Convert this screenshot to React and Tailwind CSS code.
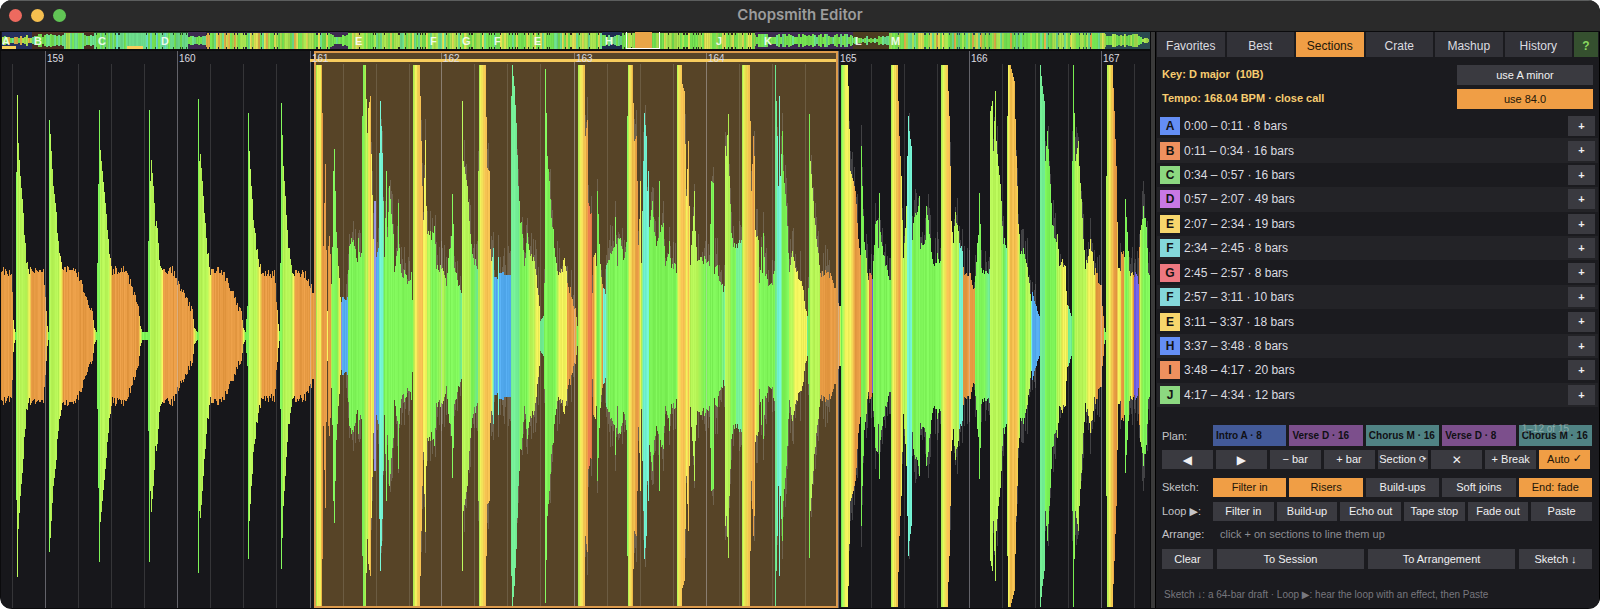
import { useMemo, useState } from 'react';

const PALETTE = {
  G: [126, 244, 88],
  L: [182, 244, 86],
  Y: [240, 240, 90],
  A: [242, 190, 78],
  O: [231, 155, 68],
  R: [230, 122, 72],
  T: [116, 238, 150],
  C: [112, 240, 208],
  B: [85, 172, 240],
  V: [150, 146, 224],
  P: [112, 96, 228],
};

// Envelope of the zoomed waveform: x, amplitude, colour (kept from the previous point if left out)
const ENVELOPE = `
1,70,O 11,69 12,50 13,16,Y 14,7 15,4,G 16,164 17,241,L 18,193 20,160 23,125 26,80 29,71,Y 31,70,O 43,68 45,40 47,10,Y 48,4,G
49,216 50,202,L 53,150 56,125 58,98 61,75,Y 63,70,O 74,70 78,66 82,54 88,38 92,25 94,8,Y 96,4,G
99,226 100,186,L 102,165 105,133 108,100 110,80,Y 112,70,O 123,70 128,64 134,46 138,30 140,10,Y 142,4,G 147,4
148,98 149,226 150,155,L 151,176 153,150 155,117 157,115 159,78 162,70,Y 163,70,O 172,70 180,54 187,40 192,27 194,8,Y 197,4,G
198,237 199,175,L 200,182 202,155 204,125 207,90 210,70,Y 212,70,O 221,70 228,58 235,42 241,25 243,8,Y 245,4,G
247,30 248,223 249,185,L 251,150 253,125 256,93 259,75,Y 262,66,O 274,66 276,40 278,12,Y 279,5,G
280,80 281,233 283,170,L 286,125 288,95 291,75 293,67,Y 295,68,O 305,65 310,57 313,47
314,271,L 316,271 317,271,Y 320,271 321,271,A 322,223,O 323,95 325,172 326,90 327,25,Y 328,95,O 329,105 330,85 331,60,L 332,95,G
333,165 334,187 335,145 336,105 338,75,L 339,60,Y 340,40 341,40,V 342,39,B 347,39 348,70,G 349,95 353,103 357,75 358,100 359,85 361,90
362,220 363,271 365,271,L 367,203 368,228,Y 370,240,A 371,182,Y 373,100 374,135,V 375,135 376,80,B 378,90 379,183,C 380,235 381,210 382,183 383,135,T
384,80,G 386,165 387,105 389,150 391,125 393,110 394,72 397,90 398,133 399,95 400,80 402,60 405,70 407,55 411,65 412,45
413,271,L 415,271,Y 419,271,A 420,240 422,150 423,120,Y 425,196 426,130 427,110,L 429,110 431,100,G 434,112 436,75 443,70,L 446,57,G
449,90 451,100 452,142 453,115 454,75 458,58 461,45,T 462,235,L 463,175 467,150 469,118 471,95,G 473,80 477,75,T 478,165,L
479,271 480,271,Y 485,271,A 487,168 489,165 490,95 491,80,Y 493,93,C 494,60,B 497,60 498,85,C 499,65,B 510,63 511,240,T
512,271 514,250 516,213 518,150 520,120,G 522,110 524,75 527,105 530,85,L 533,80 536,65,Y 539,30 540,15,T 543,20 544,60,G 545,267 547,180
549,155 551,120 553,108 555,85 557,70,L 559,65,Y 562,70 564,85 566,65 567,57,O 572,44 575,28 577,10,G
578,271,L 580,271,Y 584,271,A 585,200 587,216,O 588,133,R 591,125 592,45,O 593,80 595,90,Y 596,75,L 597,145,G 599,100 600,75,L
602,60,O 603,48,C 605,50 606,75,T 608,82,G 614,95 615,123 617,70 618,105 621,98 623,80 626,95
627,220 628,271,L 629,271,Y 632,271,A 634,195 636,200,O 637,155 638,95 640,155,Y 641,78,L 643,175,C 644,223 646,200 647,145 648,165 649,115,G
652,135 656,90 658,100 659,155 660,110 663,118 665,75 669,95 671,75 676,72 677,271,L 678,271,Y 681,271,A 682,252 684,245
686,140,Y 688,195,A 689,130,Y 690,75,L 692,110 694,145 695,110 697,80 704,80,G 709,75 711,155 713,153 714,70 717,75 720,55 724,52,T
725,190,L 726,180 728,222 729,160 731,105,G 735,90 736,92,T 741,100 742,271,L 744,271,Y 749,271,A 750,215 751,145 753,200,O 754,180,A
755,110,Y 758,100,L 759,55,G 761,90 762,70 763,105 765,65 770,53 774,65 775,271,T 776,235 777,200,C 778,150 779,240 780,160 782,205,G
783,165 786,130 788,90 789,70,L 792,85 795,75,Y 800,60 803,50 806,25 807,20,T 808,50,G 809,222 810,175,L 813,135 816,100 819,75
820,68,O 831,66 836,50 839,30 840,30,L 841,271,G 843,271,L 845,271,Y 847,271 848,250 850,165 853,155,A 855,145,O 858,105 860,85
861,190,G 862,150 864,100 866,80,L 868,60,Y 869,65,R 871,70 872,62,P 873,75,G 875,120 877,118 878,95 879,143 880,110 883,85 887,70 890,60
891,271,L 893,271,Y 897,271,A 899,200,O 901,160,Y 903,80,L 906,130 907,180,C 908,220 909,205 911,190 912,105,G 914,125 918,130 919,140
920,95 925,100 926,130 929,110 932,80 936,75 937,90 939,80 940,80 941,271,L 944,271,Y 947,271,A 949,220 950,170 951,120,Y 953,100,L
955,125 958,110 959,95,C 962,90 963,70,O 970,65 974,50 975,65,G 978,110 979,143 980,120 981,75 984,65 988,70,T 989,75
990,225,L 992,235 993,185 995,245 996,195 998,170 1000,152 1003,100,G 1006,95,T 1007,220,L 1008,271,Y 1010,271,A 1014,255 1016,180
1018,120,Y 1020,85,G 1024,90 1026,80,L 1028,65 1030,50 1031,42,C 1032,45,B 1035,35 1037,25 1039,20 1040,271,T 1042,250 1044,235
1045,175,G 1047,205 1049,170 1052,115 1055,100 1057,105,L 1059,72 1062,80,Y 1065,72 1067,35 1068,30,T 1071,20 1072,175,G 1073,271
1075,175,L 1078,195 1079,170 1082,120 1085,75 1088,85,Y 1090,98 1092,85 1094,70 1096,67,O 1101,54 1103,20 1104,8,G 1105,4 1106,160,L
1107,271 1109,271,Y 1112,271,A 1114,225,O 1116,170 1118,70,Y 1120,70 1121,85,O 1123,90 1124,80,L 1125,137,G 1127,110 1129,65,L
1131,70,Y 1133,68,O 1134,65,P 1138,60 1139,90,O 1140,115,L 1143,130,G 1146,115 1148,70 1150,60
`;

// from, to, min height, max height, colours, section tint
const OVERVIEW = [
  [2, 32, 2, 6, 'GGTGLA', '#26305e'],
  [32, 64, 3, 7, 'GTGGT', '#4a2e22'],
  [64, 84, 8, 8, 'TGTLG', '#4a2e22'],
  [84, 94, 3, 6, 'TGG', '#4a2e22'],
  [94, 188, 8, 8, 'TCTGTG', '#24402a'],
  [188, 206, 3, 6, 'GTG', '#3d2b50'],
  [206, 330, 8, 8, 'GLYGTLGA', '#26203a'],
  [330, 348, 3, 7, 'GTG', '#3d2b50'],
  [348, 602, 8, 8, 'GLGYLGTL', '#2a2a20'],
  [602, 622, 3, 6, 'GGT', '#1f2c50'],
  [622, 755, 8, 8, 'GLGLYG', '#2a2a20'],
  [755, 853, 3, 7, 'GTGG', '#3d2b50'],
  [853, 889, 1, 5, 'GTG', '#4c3c20'],
  [889, 1105, 8, 8, 'GLYLGLTGA', '#2a4a50'],
  [1105, 1140, 4, 7, 'GLG', '#2a4a50'],
  [1140, 1149, 1, 4, 'GL', '#2a4a50'],
];

const OVERVIEW_MARKS = [
  ['A', 2], ['B', 34], ['C', 98], ['D', 161], ['E', 355], ['F', 430], ['G', 462],
  ['F', 494], ['E', 534], ['H', 605], ['J', 716], ['K', 764], ['L', 855], ['M', 891],
];

const BARS = [
  [159, 45], [160, 177], [161, 310], [162, 441], [163, 574],
  [164, 706], [165, 838], [166, 969], [167, 1101],
];

const SECTIONS = [
  { letter: 'A', time: '0:00 – 0:11', bars: 8, color: 'bg-[#648ef5]' },
  { letter: 'B', time: '0:11 – 0:34', bars: 16, color: 'bg-[#ee905e]' },
  { letter: 'C', time: '0:34 – 0:57', bars: 16, color: 'bg-[#8cd880]' },
  { letter: 'D', time: '0:57 – 2:07', bars: 49, color: 'bg-[#c878e4]' },
  { letter: 'E', time: '2:07 – 2:34', bars: 19, color: 'bg-[#f7d66c]' },
  { letter: 'F', time: '2:34 – 2:45', bars: 8, color: 'bg-[#84d8da]' },
  { letter: 'G', time: '2:45 – 2:57', bars: 8, color: 'bg-[#ee7880]' },
  { letter: 'F', time: '2:57 – 3:11', bars: 10, color: 'bg-[#84d8da]' },
  { letter: 'E', time: '3:11 – 3:37', bars: 18, color: 'bg-[#f7d66c]' },
  { letter: 'H', time: '3:37 – 3:48', bars: 8, color: 'bg-[#648ef5]' },
  { letter: 'I', time: '3:48 – 4:17', bars: 20, color: 'bg-[#ee905e]' },
  { letter: 'J', time: '4:17 – 4:34', bars: 12, color: 'bg-[#8cd880]' },
];

const PLAN = [
  { name: 'Intro A · 8', color: 'bg-[#435a98]' },
  { name: 'Verse D · 16', color: 'bg-[#7c4f8c]' },
  { name: 'Chorus M · 16', color: 'bg-[#508384]' },
  { name: 'Verse D · 8', color: 'bg-[#7c4f8c]' },
  { name: 'Chorus M · 16', color: 'bg-[#508384]' },
];

const TABS = ['Favorites', 'Best', 'Sections', 'Crate', 'Mashup', 'History'];

const LEFT = 1;
const SPAN = 1149;
const MID = 285;

const noise = (n) => {
  const v = Math.sin(n * 127.1 + 11.7) * 43758.5453;
  return v - Math.floor(v);
};

const pct = (x) => `${((x - LEFT) / SPAN) * 100}%`;

const rgb = (c) => `rgb(${c.map(Math.round).join(',')})`;

const buildColumns = () => {
  let last = 'G';
  const points = ENVELOPE.trim().split(/\s+/).map((token) => {
    const [x, amp, key] = token.split(',');
    last = key || last;
    return { x: Number(x), amp: Number(amp), key: last };
  });

  const columns = [];
  let i = 0;
  for (let x = LEFT; x < LEFT + SPAN; x++) {
    while (i < points.length - 2 && points[i + 1].x <= x) i++;
    const a = points[i];
    const b = points[i + 1];
    const t = (x - a.x) / (b.x - a.x);
    let amp = a.amp + (b.amp - a.amp) * t;
    if (amp > 30 && amp < 130) amp -= noise(x) * (a.key === 'B' ? 3 : 9);
    const shade = (noise(x * 3) - 0.5) * 18;
    const color = PALETTE[a.key].map((v, k) => v + (PALETTE[b.key][k] - v) * t + shade);
    const busy = x > 345 && amp > 30 && amp < 220 && noise(x * 7) > 0.45;
    columns.push({ x, amp, fill: rgb(color), ghost: busy ? amp + 4 + noise(x * 5) * 26 : 0 });
  }
  return columns;
};

const buildOverview = () =>
  OVERVIEW.flatMap(([from, to, min, max, keys]) =>
    Array.from({ length: to - from }, (_, k) => {
      const x = from + k;
      const n = noise(x * 2);
      const step = noise(Math.floor(x / 2) * 9);
      const notch = min === 8 && n > 0.86 ? 2 : 0;
      const key = keys[Math.floor(noise(Math.floor(x / 2)) * keys.length)];
      const color = PALETTE[key].map((v) => v * (0.84 + noise(x * 4) * 0.12));
      return { x, amp: min + (max - min) * step - notch, fill: rgb(color) };
    })
  );

const Overview = () => {
  const columns = useMemo(buildOverview, []);
  return (
    <div className="relative h-[17px] overflow-hidden bg-[#15151a]">
      <svg
        className="block h-full w-full"
        viewBox="1 0 1149 17"
        preserveAspectRatio="none"
        shapeRendering="crispEdges"
        aria-hidden="true"
      >
        {OVERVIEW.map(([from, to, , , , tint]) => (
          <rect key={from} x={from} y="0" width={to - from + 1} height="17" fill={tint} />
        ))}
        {columns.map((c) => (
          <rect key={c.x} x={c.x} y={8.5 - c.amp} width="1" height={c.amp * 2} fill={c.fill} />
        ))}
        <rect x="2" y="14" width="14" height="3" fill="#f7ce5c" />
        <rect x="127" y="14" width="16" height="3" fill="#f7ce5c" />
        <rect x="635" y="0" width="17" height="16" fill="#e9a548" />
        <rect x="626" y="0" width="1" height="17" fill="#fff" />
        <rect x="659" y="0" width="1" height="17" fill="#fff" />
        <rect x="626" y="16" width="34" height="1" fill="#fff" />
      </svg>
      {OVERVIEW_MARKS.map(([letter, x]) => (
        <span
          key={x}
          className="absolute top-[3px] text-[11px] leading-3 font-bold text-white/85"
          style={{ left: pct(x) }}
        >
          {letter}
        </span>
      ))}
    </div>
  );
};

const Waveform = () => {
  const columns = useMemo(buildColumns, []);
  return (
    <div className="relative flex-1 overflow-hidden bg-[#17171b]">
      <svg
        className="absolute inset-0 h-full w-full"
        viewBox="1 0 1149 557"
        preserveAspectRatio="none"
        shapeRendering="crispEdges"
        role="img"
        aria-label="Waveform, bars 159 to 167"
      >
        <rect x="314" y="1" width="523" height="555" fill="#574427" />
        {BARS.map(([bar, x]) =>
          [-33, 33, 66, 99]
            .filter((d) => bar === 159 || d > 0)
            .map((d) => (
              <rect key={`${bar}${d}`} x={x + d} y="13" width="1" height="544" fill="#fff" opacity="0.13" />
            ))
        )}
        {columns.map((c) => c.ghost > 0 && (
          <rect key={c.x} x={c.x} y={MID - c.ghost} width="1" height={c.ghost * 2} fill="#b4b4b4" opacity="0.28" />
        ))}
        {columns.map((c) => (
          <rect key={c.x} x={c.x} y={MID - c.amp} width="1" height={c.amp * 2} fill={c.fill} />
        ))}
        {BARS.map(([bar, x]) => (
          <rect key={bar} x={x} y="0" width="1" height="557" fill="#d8d8e0" opacity="0.4" />
        ))}
        <rect x="310" y="8" width="527" height="3" fill="#f7cc5e" />
        <rect x="315" y="1" width="522" height="555" fill="none" stroke="#dc9a4c" strokeWidth="2" />
      </svg>
      {BARS.map(([bar, x]) => (
        <span
          key={bar}
          className="absolute top-0.5 text-[10px] leading-3 text-[#dcdce0]"
          style={{ left: pct(x + 2) }}
        >
          {bar}
        </span>
      ))}
    </div>
  );
};

const Button = ({ active, className = '', children, ...props }) => (
  <button
    type="button"
    className={`flex min-w-0 items-center justify-center overflow-hidden text-[11px] whitespace-nowrap ${
      active ? 'bg-[#f09e45] text-[#22160a]' : 'bg-[#3a3a40] text-[#f0f0f2]'
    } ${className}`}
    {...props}
  >
    {children}
  </button>
);

const SectionRow = ({ section, odd }) => (
  <li className={`flex items-center pr-[3px] pl-[3px] ${odd ? 'bg-[#232327]' : ''}`}>
    <span className={`flex h-[18px] w-5 items-center justify-center text-xs font-bold text-[#141414] ${section.color}`}>
      {section.letter}
    </span>
    <span className="ml-1 flex-1 text-xs text-[#dcdce0]">
      {section.time} · {section.bars} bars
    </span>
    <Button className="h-5 w-[27px] font-bold" aria-label={`Add section ${section.letter}`}>+</Button>
  </li>
);

const LabeledRow = ({ id, label, className = '', children }) => (
  <div role="group" aria-labelledby={id} className={`flex ${className}`}>
    <span id={id} className="w-[51px] shrink-0 text-[11px] leading-[18px] text-[#c4c4c8]">{label}</span>
    {children}
  </div>
);

const Sidebar = () => {
  const [tab, setTab] = useState('Sections');

  return (
    <aside className="flex w-[443px] shrink-0 flex-col bg-[#1b1b1f] pr-px pl-px">
      <nav className="flex h-[25px] gap-0.5">
        {TABS.map((name) => (
          <button
            key={name}
            type="button"
            onClick={() => setTab(name)}
            className={`flex-1 basis-0 pt-0.5 text-xs ${
              tab === name ? 'bg-[#f09e45] text-[#22160a]' : 'bg-[#323238] text-[#dcdce0]'
            }`}
          >
            {name}
          </button>
        ))}
        <button type="button" className="w-6 bg-[#35502f] pt-0.5 text-xs font-bold text-[#8ad860]">?</button>
      </nav>

      <div className="mt-2 flex flex-col gap-1 pr-[5px] pl-[5px]">
        <div className="flex justify-between">
          <p className="text-[11px] leading-[18px] font-bold whitespace-pre text-[#f7cc70]">{'Key: D major  (10B)'}</p>
          <Button className="h-5 w-[136px]">use A minor</Button>
        </div>
        <div className="flex justify-between">
          <p className="text-[11px] leading-[18px] font-bold text-[#f7cc70]">Tempo: 168.04 BPM · close call</p>
          <Button active className="h-5 w-[136px]">use 84.0</Button>
        </div>
      </div>

      <ul className="mt-[5px] grid h-[293px] auto-rows-fr">
        {SECTIONS.map((section, i) => (
          <SectionRow key={i} section={section} odd={i % 2 === 1} />
        ))}
      </ul>

      <div className="mt-[18px] flex flex-col pr-[6px] pl-[5px]">
        <LabeledRow id="plan-label" label="Plan:" className="relative items-center">
          <div className="flex flex-1 gap-[3px]">
            {PLAN.map((part, i) => (
              <button
                key={i}
                type="button"
                className={`h-[21px] min-w-0 flex-1 overflow-hidden pl-[3px] text-left text-[10px] font-bold whitespace-nowrap text-[#101014] ${part.color}`}
              >
                {part.name}
              </button>
            ))}
          </div>
          <span className="absolute -top-0.5 right-[23px] text-[10px] leading-3 text-white/35">1–12 of 15</span>
        </LabeledRow>

        <div className="mt-1 mr-0.5 grid h-[19px] grid-cols-8 gap-[3px]">
          <Button aria-label="Move left"><span className="font-['DejaVu_Sans'] text-xs">◀</span></Button>
          <Button aria-label="Move right"><span className="font-['DejaVu_Sans'] text-xs">▶</span></Button>
          <Button>− bar</Button>
          <Button>+ bar</Button>
          <Button>Section&nbsp;<span className="font-['DejaVu_Sans'] text-[9px]">⟳</span></Button>
          <Button aria-label="Remove"><span className="font-['DejaVu_Sans'] text-xs">✕</span></Button>
          <Button>+ Break</Button>
          <Button active>Auto&nbsp;<span className="font-['DejaVu_Sans'] font-bold">✓</span></Button>
        </div>

        <LabeledRow id="sketch-label" label="Sketch:" className="mt-[9px]">
          <div className="grid h-[19px] flex-1 grid-cols-5 gap-[3px]">
            <Button active>Filter in</Button>
            <Button active>Risers</Button>
            <Button>Build-ups</Button>
            <Button>Soft joins</Button>
            <Button active>End: fade</Button>
          </div>
        </LabeledRow>

        <LabeledRow
          id="loop-label"
          label={<>Loop <span className="font-['DejaVu_Sans']">▶</span>:</>}
          className="mt-[5px]"
        >
          <div className="grid h-[19px] flex-1 grid-cols-6 gap-[3px]">
            <Button>Filter in</Button>
            <Button>Build-up</Button>
            <Button>Echo out</Button>
            <Button>Tape stop</Button>
            <Button>Fade out</Button>
            <Button>Paste</Button>
          </div>
        </LabeledRow>

        <LabeledRow id="arrange-label" label="Arrange:" className="mt-1">
          <p className="ml-[7px] text-[11px] leading-[18px] text-[#8c8c92]">click + on sections to line them up</p>
        </LabeledRow>

        <div className="mt-1.5 flex h-5 gap-1">
          <Button className="w-[51px]">Clear</Button>
          <Button className="flex-1">To Session</Button>
          <Button className="flex-1">To Arrangement</Button>
          <Button className="w-[73px]">Sketch ↓</Button>
        </div>

        <p className="mt-[18px] pl-0.5 text-[10px] leading-4 text-[#77777e]">
          Sketch ↓: a 64-bar draft · Loop <span className="font-['DejaVu_Sans']">▶</span>: hear the loop with an effect, then Paste
        </p>
      </div>
    </aside>
  );
};

const App = () => (
  <div className="min-h-screen bg-white font-['Liberation_Sans',Arial,sans-serif]">
    <div className="flex min-h-screen flex-col overflow-hidden rounded-xl bg-[#0b0b0d]">
      <header className="relative flex h-[31px] items-center justify-center border-t border-[#5c5e5e] bg-[#2a2a2a] pb-0.5">
        <div className="absolute left-[9px] flex gap-[9px]">
          <button type="button" aria-label="Close" className="size-[13px] rounded-full bg-[#ed6a5f]" />
          <button type="button" aria-label="Minimize" className="size-[13px] rounded-full bg-[#f5bf4f]" />
          <button type="button" aria-label="Zoom" className="size-[13px] rounded-full bg-[#61c555]" />
        </div>
        <h1 className="font-['Inter',sans-serif] text-[15px] font-semibold text-[#9c9c9c]">Chopsmith Editor</h1>
      </header>
      <main className="flex flex-1 pt-px pb-px">
        <div className="flex min-w-0 flex-1 flex-col gap-0.5 pl-px">
          <Overview />
          <Waveform />
        </div>
        <div className="ml-px w-1 bg-[#3a3a3a]" />
        <div className="w-px bg-black" />
        <Sidebar />
        <div className="w-px bg-black" />
      </main>
    </div>
  </div>
);

export default App;
